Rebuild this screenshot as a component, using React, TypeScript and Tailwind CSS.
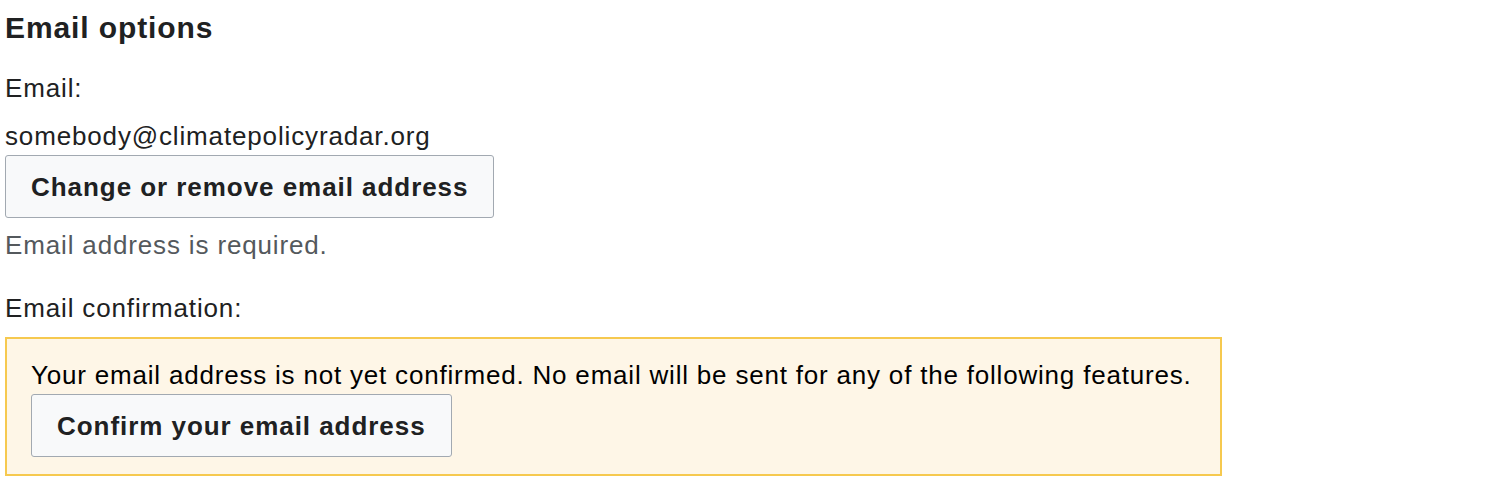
import React from "react";

const font = { fontFamily: '"Liberation Sans", Arial, sans-serif' };

const Button: React.FC<{ children: React.ReactNode }> = ({ children }) => (
  <button className="block rounded-[3px] border border-[#a2a9b1] bg-[#f8f9fa] px-[25px] h-[63px] text-[26px] tracking-[0.95px] font-bold text-[#202122] leading-none">
    {children}
  </button>
);

export default function App() {
  return (
    <div className="bg-white min-h-screen px-[5px] pt-[9px] text-[#202122] text-[26px] tracking-[0.85px]" style={font}>
      <h2 className="text-[30px] tracking-[0.9px] font-bold leading-[38px]">Email options</h2>

      <div className="mt-[22px] leading-[38px]">Email:</div>
      <div className="mt-[10px] leading-[38px]">somebody@climatepolicyradar.org</div>
      <Button>Change or remove email address</Button>
      <div className="mt-[8px] leading-[38px] text-[#54595d]">Email address is required.</div>

      <div className="mt-[25px] leading-[38px]">Email confirmation:</div>
      <div className="mt-[10px] w-[1217px] border-2 border-[#f6c94f] bg-[#fef6e7] px-[24px] py-[17px]">
        <div className="leading-[38px] text-black tracking-[0.8px]">
          Your email address is not yet confirmed. No email will be sent for any of the following features.
        </div>
        <Button>Confirm your email address</Button>
      </div>
    </div>
  );
}
